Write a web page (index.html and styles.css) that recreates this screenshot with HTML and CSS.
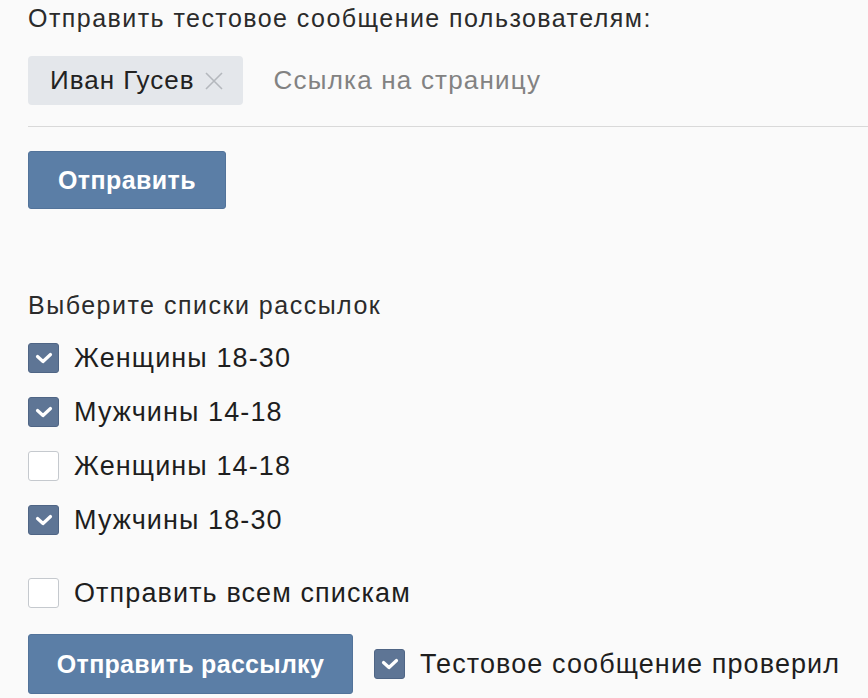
FILE: index.html
```
<!DOCTYPE html>
<html lang="ru">
<head>
    <meta charset="UTF-8">
    <title>Рассылка</title>
    <link rel="stylesheet" href="styles.css">
</head>
<body>
    <div class="container">
        <p class="title">Отправить тестовое сообщение пользователям:</p>

        <div class="recipients">
            <span class="chip">Иван Гусев
                <svg class="chip-close" width="18" height="18" viewBox="0 0 18 18"><path d="M1 1L17 17M17 1L1 17" stroke="#b4b8bd" stroke-width="1.6" fill="none"/></svg>
            </span>
            <span class="placeholder">Ссылка на страницу</span>
        </div>

        <button class="btn">Отправить</button>

        <p class="title lists-title">Выберите списки рассылок</p>

        <div class="check-list">
            <label class="check"><span class="box checked"><svg width="18" height="12" viewBox="0 0 18 12"><path d="M2.5 4.5L8 9.5L15.5 2.5" stroke="#fff" stroke-width="3.2" fill="none" stroke-linecap="round" stroke-linejoin="round"/></svg></span>Женщины 18-30</label>
            <label class="check"><span class="box checked"><svg width="18" height="12" viewBox="0 0 18 12"><path d="M2.5 4.5L8 9.5L15.5 2.5" stroke="#fff" stroke-width="3.2" fill="none" stroke-linecap="round" stroke-linejoin="round"/></svg></span>Мужчины 14-18</label>
            <label class="check"><span class="box"></span>Женщины 14-18</label>
            <label class="check"><span class="box checked"><svg width="18" height="12" viewBox="0 0 18 12"><path d="M2.5 4.5L8 9.5L15.5 2.5" stroke="#fff" stroke-width="3.2" fill="none" stroke-linecap="round" stroke-linejoin="round"/></svg></span>Мужчины 18-30</label>
        </div>

        <label class="check all-lists"><span class="box"></span>Отправить всем спискам</label>

        <div class="footer">
            <button class="btn btn-wide">Отправить рассылку</button>
            <label class="check"><span class="box checked"><svg width="18" height="12" viewBox="0 0 18 12"><path d="M2.5 4.5L8 9.5L15.5 2.5" stroke="#fff" stroke-width="3.2" fill="none" stroke-linecap="round" stroke-linejoin="round"/></svg></span>Тестовое сообщение проверил</label>
        </div>
    </div>
</body>
</html>
```

FILE: styles.css
```
body {
    font-family: 'Liberation Sans', Arial, sans-serif;
    background-color: #fafafa;
    color: #222;
    margin: 0;
    padding: 0;
}
.container {
    padding: 0 0 0 28px;
}
.title {
    font-size: 25px;
    line-height: 30px;
    color: #2b2b2b;
    margin: 3px 0 0;
    letter-spacing: 1.45px;
}
.recipients {
    display: flex;
    align-items: center;
    gap: 31px;
    margin-top: 23px;
    padding-bottom: 21px;
    border-bottom: 1px solid #d9d9d9;
}
.chip {
    display: flex;
    align-items: center;
    gap: 10px;
    height: 49px;
    padding: 0 20px 0 22px;
    background-color: #e4e7eb;
    border-radius: 4px;
    font-size: 26px;
    letter-spacing: 1px;
    color: #222;
}
.placeholder {
    font-size: 26px;
    color: #828282;
    letter-spacing: 1.2px;
}
.btn {
    display: block;
    font-family: 'Liberation Sans', Arial, sans-serif;
    font-size: 25px;
    font-weight: bold;
    letter-spacing: 0.4px;
    white-space: nowrap;
    color: #fff;
    background-color: #5b7ea6;
    border: 1px solid #52739a;
    border-radius: 3px;
    height: 58px;
    padding: 0 29px;
    margin-top: 24px;
}
.lists-title {
    margin-top: 81px;
    letter-spacing: 1.5px;
}
.check-list {
    display: flex;
    flex-direction: column;
    gap: 24px;
    margin-top: 23px;
}
.check {
    display: flex;
    align-items: center;
    gap: 15px;
    font-size: 27px;
    line-height: 30px;
    color: #1e1e1e;
    letter-spacing: 1.1px;
}
.box {
    display: flex;
    align-items: center;
    justify-content: center;
    width: 31px;
    height: 30px;
    box-sizing: border-box;
    border: 1px solid #c5c9ce;
    border-radius: 3px;
    background-color: #fff;
    flex-shrink: 0;
}
.box.checked {
    background-color: #5e7595;
    border-color: #4f6585;
}
.all-lists {
    margin-top: 43px;
}
.footer {
    display: flex;
    align-items: center;
    gap: 21px;
    margin-top: 26px;
}
.footer .btn {
    margin-top: 0;
    letter-spacing: 0.3px;
}
.btn-wide {
    height: 60px;
    width: 325px;
    padding: 0;
}
```
